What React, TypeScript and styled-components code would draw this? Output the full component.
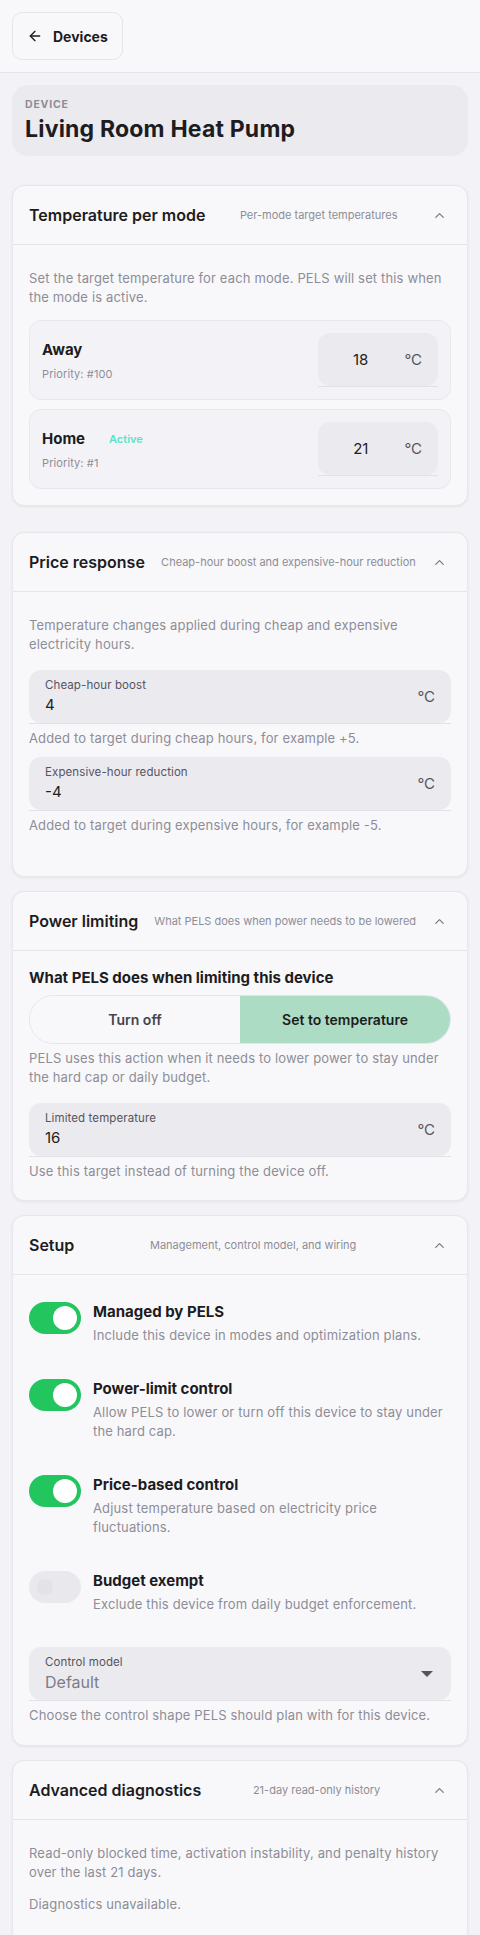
import React from "react";
import styled, { createGlobalStyle } from "styled-components";
import { ArrowLeft, ChevronUp } from "lucide-react";

const GlobalStyle = createGlobalStyle`
  * { box-sizing: border-box; }
  body {
    margin: 0;
    background: #f3f3f7;
    font-family: Inter, "Noto Sans", sans-serif;
    color: #1c1c22;
  }
`;

const TopBar = styled.header`
  background: #f8f8fa;
  border-bottom: 1px solid #e4e4ea;
  padding: 12px;
`;

const BackButton = styled.button`
  display: flex;
  align-items: center;
  gap: 10px;
  height: 48px;
  padding: 0 14px;
  border: 1px solid #e4e4ea;
  border-radius: 10px;
  background: #f8f8fa;
  font-family: inherit;
  font-size: 14px;
  font-weight: 700;
  color: #1c1c22;
`;

const Main = styled.main`
  padding: 12px;
  display: flex;
  flex-direction: column;
`;

const DeviceCard = styled.div`
  background: #ebeaef;
  border-radius: 16px;
  padding: 12px 13px 13px;
  margin-bottom: 29px;
`;

const Eyebrow = styled.div`
  font-size: 10.5px;
  font-weight: 700;
  letter-spacing: 0.8px;
  color: #8d8d97;
  line-height: 16px;
`;

const DeviceTitle = styled.h1`
  margin: 2px 0 0;
  font-size: 23px;
  font-weight: 700;
  letter-spacing: 0.2px;
  line-height: 28px;
`;

const Section = styled.section<{ $gap?: number }>`
  background: #f8f8fa;
  border: 1px solid #e6e6ec;
  border-radius: 12px;
  box-shadow: 0 1px 3px rgba(20, 20, 40, 0.07);
  margin-bottom: ${(p) => p.$gap ?? 14}px;
  overflow: hidden;
`;

const SectionHead = styled.div`
  display: flex;
  align-items: center;
  height: 59px;
  padding: 0 20px 0 16px;
  border-bottom: 1px solid #e4e4ea;
`;

const SectionTitle = styled.h2`
  margin: 0;
  font-size: 16px;
  font-weight: 600;
  white-space: nowrap;
`;

const SectionSub = styled.span`
  flex: 1;
  text-align: center;
  font-size: 11px;
  color: #8d8d97;
  padding: 0 10px;
  white-space: nowrap;
`;

const Chevron = styled(ChevronUp)`
  color: #7a7a84;
  flex-shrink: 0;
`;

const SectionBody = styled.div<{ $bottom?: number }>`
  padding: 16px 16px ${(p) => p.$bottom ?? 16}px;
  display: flex;
  flex-direction: column;
`;

const Muted = styled.p<{ $top?: number; $bottom?: number }>`
  margin: ${(p) => p.$top ?? 0}px 0 ${(p) => p.$bottom ?? 0}px;
  font-size: 13px;
  line-height: 19px;
  letter-spacing: 0.15px;
  color: #8d8d97;
`;

const ModeList = styled.div`
  display: flex;
  flex-direction: column;
  gap: 9px;
  margin-top: 13px;
`;

const ModeCard = styled.div`
  display: flex;
  align-items: center;
  justify-content: space-between;
  padding: 12px;
  border: 1px solid #e6e6ec;
  border-radius: 12px;
  background: #f3f3f7;
`;

const ModeName = styled.div`
  display: flex;
  align-items: center;
  gap: 24px;
  font-size: 15px;
  font-weight: 700;
  line-height: 20px;
`;

const ActiveTag = styled.span`
  font-size: 11px;
  font-weight: 600;
  color: #5be3c6;
`;

const Priority = styled.div`
  margin-top: 7px;
  font-size: 11px;
  letter-spacing: 0.1px;
  color: #8d8d97;
`;

const Underline = styled.div<{ $width?: string }>`
  width: ${(p) => p.$width ?? "100%"};
  border-bottom: 1px solid #e1e1e7;
`;

const Filled = styled.div`
  display: flex;
  align-items: center;
  height: 53px;
  background: #ebeaef;
  border-radius: 12px;
  padding: 0 16px;
`;

const TempValue = styled.span`
  flex: 1;
  text-align: right;
  font-size: 15px;
  color: #222;
`;

const Unit = styled.span<{ $gap?: number }>`
  margin-left: ${(p) => p.$gap ?? 0}px;
  font-size: 15px;
  color: #55555f;
`;

const FieldText = styled.div`
  flex: 1;
  display: flex;
  flex-direction: column;
  gap: 2px;
`;

const FieldLabel = styled.span`
  font-size: 11.5px;
  color: #55555f;
  line-height: 15px;
  letter-spacing: 0.1px;
`;

const FieldValue = styled.span<{ $muted?: boolean }>`
  font-size: ${(p) => (p.$muted ? 16 : 15)}px;
  line-height: 20px;
  color: ${(p) => (p.$muted ? "#7d7d87" : "#222")};
`;

const Help = styled.p<{ $bottom?: number }>`
  margin: 5px 0 ${(p) => p.$bottom ?? 0}px;
  font-size: 13px;
  line-height: 19px;
  letter-spacing: 0.15px;
  color: #8d8d97;
`;

const SubHeading = styled.h3`
  margin: 0 0 6px;
  font-size: 15px;
  font-weight: 700;
  line-height: 22px;
`;

const Segmented = styled.div`
  display: grid;
  grid-template-columns: 1fr 1fr;
  height: 49px;
  border: 1px solid #e4e4ea;
  border-radius: 25px;
  overflow: hidden;
`;

const Segment = styled.button<{ $active?: boolean }>`
  border: none;
  font-family: inherit;
  font-size: 14px;
  font-weight: 600;
  background: ${(p) => (p.$active ? "#acdcc3" : "#f8f8fa")};
  color: ${(p) => (p.$active ? "#1c1c22" : "#45454d")};
`;

const ToggleRow = styled.div`
  display: flex;
  align-items: flex-start;
  gap: 12px;
  padding: 11px 0;
`;

const Track = styled.span<{ $on?: boolean }>`
  position: relative;
  flex-shrink: 0;
  width: 52px;
  height: 32px;
  border-radius: 16px;
  background: ${(p) => (p.$on ? "#22c55e" : "#e8e8ed")};
`;

const Knob = styled.span<{ $on?: boolean }>`
  position: absolute;
  top: ${(p) => (p.$on ? 4 : 8)}px;
  left: ${(p) => (p.$on ? 24 : 8)}px;
  width: ${(p) => (p.$on ? 24 : 16)}px;
  height: ${(p) => (p.$on ? 24 : 16)}px;
  border-radius: 50%;
  background: ${(p) => (p.$on ? "#ffffff" : "#e2e2e8")};
`;

const ToggleText = styled.div`
  display: flex;
  flex-direction: column;
  gap: 4px;
`;

const ToggleTitle = styled.span`
  font-size: 15px;
  font-weight: 700;
  line-height: 20px;
`;

const ToggleRows = styled.div`
  display: flex;
  flex-direction: column;
  gap: 12px;
  margin-bottom: 22px;
`;

const Caret = styled.span`
  width: 0;
  height: 0;
  border-left: 6px solid transparent;
  border-right: 6px solid transparent;
  border-top: 6px solid #55555c;
  margin-right: 2px;
`;

function Header({ title, sub }: { title: string; sub: string }) {
  return (
    <SectionHead>
      <SectionTitle>{title}</SectionTitle>
      <SectionSub>{sub}</SectionSub>
      <Chevron size={15} strokeWidth={2} />
    </SectionHead>
  );
}

function TempField({ label, value }: { label: string; value: string }) {
  return (
    <Underline>
      <Filled>
        <FieldText>
          <FieldLabel>{label}</FieldLabel>
          <FieldValue>{value}</FieldValue>
        </FieldText>
        <Unit>°C</Unit>
      </Filled>
    </Underline>
  );
}

const modes = [
  { name: "Away", priority: "#100", temp: "18", active: false },
  { name: "Home", priority: "#1", temp: "21", active: true },
];

const toggles = [
  { title: "Managed by PELS", desc: "Include this device in modes and optimization plans.", on: true },
  { title: "Power-limit control", desc: "Allow PELS to lower or turn off this device to stay under the hard cap.", on: true },
  { title: "Price-based control", desc: "Adjust temperature based on electricity price fluctuations.", on: true },
  { title: "Budget exempt", desc: "Exclude this device from daily budget enforcement.", on: false },
];

export default function App() {
  return (
    <>
      <GlobalStyle />
      <TopBar>
        <BackButton>
          <ArrowLeft size={16} strokeWidth={2} />
          Devices
        </BackButton>
      </TopBar>
      <Main>
        <DeviceCard>
          <Eyebrow>DEVICE</Eyebrow>
          <DeviceTitle>Living Room Heat Pump</DeviceTitle>
        </DeviceCard>

        <Section $gap={26}>
          <Header title="Temperature per mode" sub="Per-mode target temperatures" />
          <SectionBody>
            <Muted $top={8}>
              Set the target temperature for each mode. PELS will set this when the mode is active.
            </Muted>
            <ModeList>
              {modes.map((m) => (
                <ModeCard key={m.name}>
                  <div>
                    <ModeName>
                      {m.name}
                      {m.active && <ActiveTag>Active</ActiveTag>}
                    </ModeName>
                    <Priority>Priority: {m.priority}</Priority>
                  </div>
                  <Underline $width="120px">
                    <Filled>
                      <TempValue>{m.temp}</TempValue>
                      <Unit $gap={36}>°C</Unit>
                    </Filled>
                  </Underline>
                </ModeCard>
              ))}
            </ModeList>
          </SectionBody>
        </Section>

        <Section>
          <Header title="Price response" sub="Cheap-hour boost and expensive-hour reduction" />
          <SectionBody $bottom={41}>
            <Muted $top={8} $bottom={16}>
              Temperature changes applied during cheap and expensive electricity hours.
            </Muted>
            <TempField label="Cheap-hour boost" value="4" />
            <Help $bottom={9}>Added to target during cheap hours, for example +5.</Help>
            <TempField label="Expensive-hour reduction" value="-4" />
            <Help>Added to target during expensive hours, for example -5.</Help>
          </SectionBody>
        </Section>

        <Section>
          <Header title="Power limiting" sub="What PELS does when power needs to be lowered" />
          <SectionBody $bottom={19}>
            <SubHeading>What PELS does when limiting this device</SubHeading>
            <Segmented>
              <Segment>Turn off</Segment>
              <Segment $active>Set to temperature</Segment>
            </Segmented>
            <Help $bottom={16}>
              PELS uses this action when it needs to lower power to stay under the hard cap or daily budget.
            </Help>
            <TempField label="Limited temperature" value="16" />
            <Help>Use this target instead of turning the device off.</Help>
          </SectionBody>
        </Section>

        <Section>
          <Header title="Setup" sub="Management, control model, and wiring" />
          <SectionBody $bottom={20}>
            <ToggleRows>
              {toggles.map((t) => (
                <ToggleRow key={t.title}>
                  <Track $on={t.on}>
                    <Knob $on={t.on} />
                  </Track>
                  <ToggleText>
                    <ToggleTitle>{t.title}</ToggleTitle>
                    <Muted>{t.desc}</Muted>
                  </ToggleText>
                </ToggleRow>
              ))}
            </ToggleRows>
            <Underline>
              <Filled>
                <FieldText>
                  <FieldLabel>Control model</FieldLabel>
                  <FieldValue $muted>Default</FieldValue>
                </FieldText>
                <Caret />
              </Filled>
            </Underline>
            <Help>Choose the control shape PELS should plan with for this device.</Help>
          </SectionBody>
        </Section>

        <Section>
          <Header title="Advanced diagnostics" sub="21-day read-only history" />
          <SectionBody $bottom={40}>
            <Muted $top={8}>
              Read-only blocked time, activation instability, and penalty history over the last 21 days.
            </Muted>
            <Muted $top={13}>Diagnostics unavailable.</Muted>
          </SectionBody>
        </Section>
      </Main>
    </>
  );
}
